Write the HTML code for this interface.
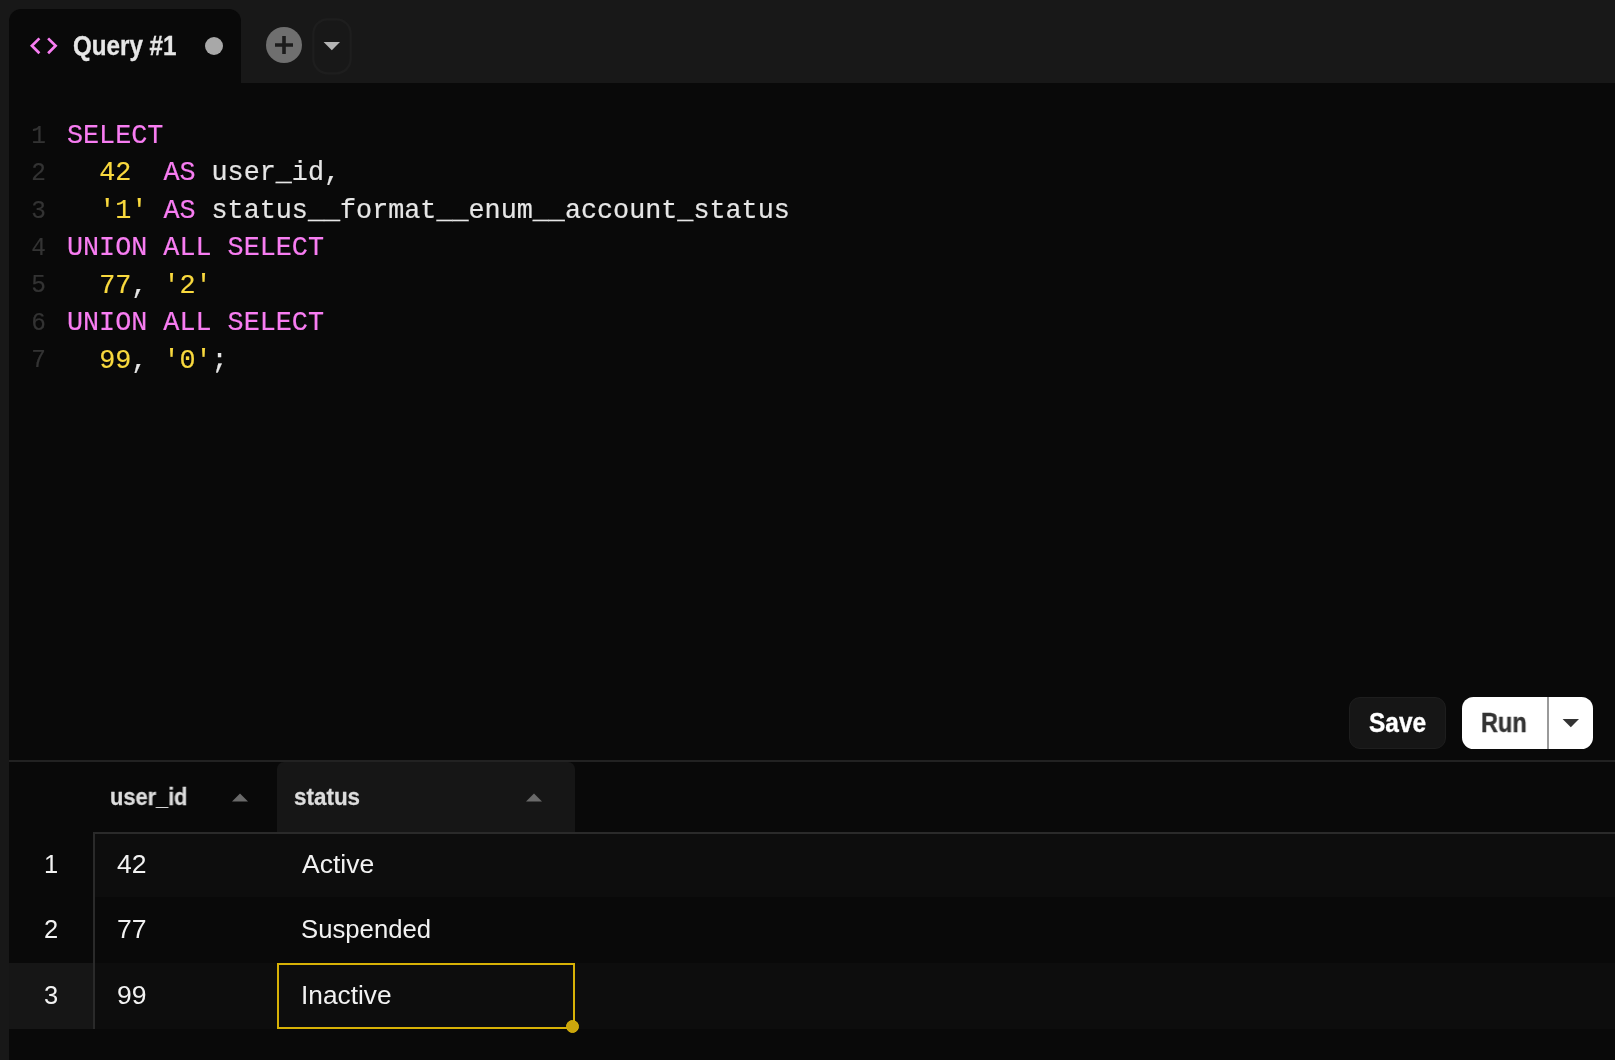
<!DOCTYPE html>
<html>
<head>
<meta charset="utf-8">
<title>Query #1</title>
<style>
  html, body { margin: 0; padding: 0; }
  body {
    width: 1615px; height: 1060px; overflow: hidden; position: relative;
    background: #181818;
    font-family: "Liberation Sans", sans-serif;
    color: #e8e8e8;
  }
  .abs { position: absolute; }
  .t { will-change: transform; transform-origin: 0 0; }
  /* main panel */
  #panel { left: 9px; top: 83px; width: 1606px; height: 977px; background: #090909; }
  /* tab */
  #tab { left: 9px; top: 9px; width: 232px; height: 75px; background: #090909; border-radius: 12px 12px 0 0; }
  #tabicon { left: 29px; top: 35px; }
  #tabtitle { -webkit-text-stroke: 0.3px currentColor; left: 72.9px; top: 28.85px; transform: scale(1.007,1.13); font-weight: bold; font-size: 24px; line-height: 30px; color: #e6e6e6; white-space: nowrap; }
  #tabdot { left: 205px; top: 37px; width: 18px; height: 18px; border-radius: 50%; background: #a8a8a8; }
  #plus { left: 266px; top: 27px; width: 36px; height: 36px; border-radius: 50%; background: #6f6f6f; }
  #pill { left: 312px; top: 18px; width: 37px; height: 54px; border-radius: 15px; border: 1.5px solid #1f1f1f; }
  /* code */
  #gutter { left: 9px; top: 116.9px; width: 37px; text-align: right; color: #333333; font-size: 24.4px; line-height: 35.02px; transform: scaleY(1.07); }
  #code { left: 67.1px; top: 117.1px; color: #e6e6e6; }
  .mono { -webkit-text-stroke: 0.2px; font-family: "Liberation Mono", monospace; font-size: 26.78px; line-height: 36.03px; white-space: pre; transform: scaleY(1.04); }
  .k { color: #f87df2; }
  .n { color: #f9d93e; }
  /* buttons */
  #save { left: 1349px; top: 697px; width: 97px; height: 52px; box-sizing: border-box; border-radius: 11px; background: #161616; border: 1px solid #1e1e1e; }
  #run { left: 1462px; top: 697px; width: 131px; height: 52px; border-radius: 11.5px; background: #ffffff; }
  #runsep { left: 1547px; top: 697px; width: 2px; height: 52px; background: #9a9a9a; }
  .btxt { -webkit-text-stroke: 0.3px currentColor; font-weight: bold; font-size: 24px; line-height: 30px; white-space: nowrap; }
  /* table */
  #hdiv { left: 9px; top: 760px; width: 1606px; height: 2px; background: #222222; }
  #stathead { left: 277px; top: 762px; width: 298px; height: 71px; background: #161616; border-radius: 7px 7px 0 0; }
  .hd { -webkit-text-stroke: 0.25px currentColor; font-weight: bold; font-size: 22px; line-height: 28px; color: #dddddd; white-space: nowrap; }
  #hline { left: 93px; top: 832px; width: 1522px; height: 2px; background: #2a2a2a; }
  #vline { left: 93px; top: 832px; width: 2px; height: 197px; background: #2a2a2a; }
  .row { left: 95px; width: 1520px; height: 65px; background: #0d0d0d; }
  .cell { font-size: 25.5px; line-height: 32px; color: #f2f2f2; white-space: nowrap; }
  #rn3 { left: 9px; top: 963px; width: 84px; height: 66px; background: #161616; }
  #sel { left: 277px; top: 963px; width: 298px; height: 66px; box-sizing: border-box; border: 2px solid #d7b106; }
  #seldot { left: 565.8px; top: 1019.8px; width: 13.4px; height: 13.4px; box-sizing: border-box; border-radius: 50%; background: #cba50d; border: 1px solid #d9b30a; }
</style>
</head>
<body>
  <div id="panel" class="abs"></div>
  <div id="tab" class="abs"></div>
  <svg id="tabicon" class="abs" width="30" height="22" viewBox="0 0 30 22">
    <path d="M10.4 3.4 L2.9 10.8 L10.4 18.2" fill="none" stroke="#f87df2" stroke-width="2.7"/>
    <path d="M19.1 3.4 L26.6 10.8 L19.1 18.2" fill="none" stroke="#f87df2" stroke-width="2.7"/>
  </svg>
  <div id="tabtitle" class="abs t">Query #1</div>
  <div id="tabdot" class="abs"></div>
  <div id="plus" class="abs">
    <svg width="36" height="36" viewBox="0 0 36 36"><path d="M18 9 V27 M9 18 H27" stroke="#1c1c1c" stroke-width="3.6" fill="none"/></svg>
  </div>
  <svg class="abs" style="left:305px;top:10px" width="55" height="72" viewBox="0 0 55 72"><rect x="8.4" y="9.3" width="37.2" height="54" rx="14.2" ry="14.2" fill="none" stroke="#1e1e1e" stroke-width="2.3"/></svg>
  <svg class="abs" style="left:323px;top:42px" width="18" height="9" viewBox="0 0 18 9"><path d="M0.6 0 H17 L8.8 8.2 Z" fill="#b4b4b4"/></svg>

  <div id="gutter" class="abs mono t">1
2
3
4
5
6
7</div>
  <div id="code" class="abs mono t"><span class="k">SELECT</span>
  <span class="n">42</span>  <span class="k">AS</span> user_id,
  <span class="n">'1'</span> <span class="k">AS</span> status__format__enum__account_status
<span class="k">UNION ALL SELECT</span>
  <span class="n">77</span>, <span class="n">'2'</span>
<span class="k">UNION ALL SELECT</span>
  <span class="n">99</span>, <span class="n">'0'</span>;</div>

  <div id="save" class="abs"></div>
  <div class="abs btxt t" style="left:1369.0px;top:706.05px;color:#ffffff;transform:scale(1.02,1.15)">Save</div>
  <div id="run" class="abs"></div>
  <div id="runsep" class="abs"></div>
  <div class="abs btxt t" style="left:1481.1px;top:706.05px;color:#333333;transform:scale(0.98,1.15)">Run</div>
  <svg class="abs" style="left:1562px;top:719px" width="18" height="9" viewBox="0 0 18 9"><path d="M0.6 0 H17 L8.8 8.2 Z" fill="#333333"/></svg>

  <div id="hdiv" class="abs"></div>
  <div id="stathead" class="abs"></div>
  <div class="abs hd t" style="left:109.8px;top:782px;transform:scale(0.99,1.09)">user_id</div>
  <div class="abs hd t" style="left:294.2px;top:782px;transform:scale(1.02,1.09)">status</div>
  <svg class="abs" style="left:232px;top:792.7px" width="16" height="9" viewBox="0 0 16 9"><path d="M0 8.5 L8 0.5 L16 8.5 Z" fill="#6a6a6a"/></svg>
  <svg class="abs" style="left:526px;top:792.7px" width="16" height="9" viewBox="0 0 16 9"><path d="M0 8.5 L8 0.5 L16 8.5 Z" fill="#6a6a6a"/></svg>

  <div class="abs row" style="top:834px;height:63px"></div>
  <div class="abs row" style="top:963px;height:66px"></div>
  <div id="rn3" class="abs"></div>
  <div id="hline" class="abs"></div>
  <div id="vline" class="abs"></div>

  <div class="abs cell t" style="left:43.6px;top:847.6px">1</div>
  <div class="abs cell t" style="left:43.8px;top:913px">2</div>
  <div class="abs cell t" style="left:43.8px;top:979px">3</div>
  <div class="abs cell t" style="left:117px;top:847.6px;transform:scaleX(1.04)">42</div>
  <div class="abs cell t" style="left:117px;top:913px;transform:scaleX(1.04)">77</div>
  <div class="abs cell t" style="left:117px;top:979px;transform:scaleX(1.04)">99</div>
  <div class="abs cell t" style="left:301.6px;top:847.6px;transform:scaleX(1.04)">Active</div>
  <div class="abs cell t" style="left:300.9px;top:913px;transform:scaleX(1.008)">Suspended</div>
  <div class="abs cell t" style="left:301.4px;top:979px;transform:scaleX(1.03)">Inactive</div>

  <div id="sel" class="abs"></div>
  <div id="seldot" class="abs"></div>
</body>
</html>
